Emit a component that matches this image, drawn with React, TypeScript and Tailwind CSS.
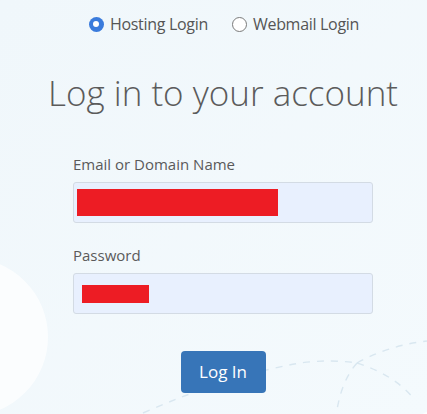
import React from "react";

function Radio({ checked, label }: { checked: boolean; label: string }) {
  return (
    <label className="flex items-center gap-[6px]">
      {checked ? (
        <span className="w-[15px] h-[15px] rounded-full bg-[#3a7bdc] flex items-center justify-center">
          <span className="w-[6px] h-[6px] rounded-full bg-white" />
        </span>
      ) : (
        <span className="w-[15px] h-[15px] rounded-full border border-[#7a7a7a] bg-white" />
      )}
      <span className="text-[16px] tracking-[-0.3px] text-[#555]">{label}</span>
    </label>
  );
}

export default function App() {
  return (
    <div
      className="relative w-[427px] h-[414px] overflow-hidden bg-[#f2f9fc]"
      style={{ fontFamily: '"Open Sans", "Noto Sans", sans-serif' }}
    >
      {/* decorative background */}
      <div className="absolute left-0 top-0 w-[427px] h-[414px] bg-gradient-to-br from-[#f0f7fb] to-[#f4fafd]" />
      <div className="absolute left-[-110px] top-[258px] w-[158px] h-[158px] rounded-full bg-white/70" />
      <div className="absolute left-[370px] top-[402px] w-[200px] h-[200px] rounded-full bg-white/80" />
      <svg className="absolute left-0 top-0" width="427" height="414" fill="none">
        <g stroke="#d9e7f0" strokeWidth="1.4" strokeDasharray="7 7">
          <path d="M143 413 Q 230 375 300 363 Q 330 359 357 363" />
          <path d="M357 363 Q 390 345 427 341" />
          <path d="M357 363 Q 395 375 415 400" />
          <path d="M357 363 Q 342 380 337 410" />
        </g>
      </svg>

      <div className="relative flex flex-col items-center pl-[19px]">
        <div className="flex items-center gap-[24px] mt-[12px] h-[24px] pl-[2px]">
          <Radio checked label="Hosting Login" />
          <Radio checked={false} label="Webmail Login" />
        </div>

        <h1 className="mt-[33px] text-[35px] leading-[48px] font-light text-[#5b5b5b]">
          Log in to your account
        </h1>

        <div className="w-[300px] mt-[37px] flex flex-col">
          <div className="text-[15px] leading-[20px] text-[#5a5a5a]">Email or Domain Name</div>
          <div className="mt-[8px] h-[41px] rounded-[3px] border border-[#d3dbe4] bg-[#e8f0fe] flex items-center pl-[3px]">
            <div className="w-[201px] h-[27px] bg-[#ed1c24]" />
          </div>

          <div className="mt-[22px] text-[15px] leading-[20px] text-[#5a5a5a]">Password</div>
          <div className="mt-[8px] h-[41px] rounded-[3px] border border-[#d3dbe4] bg-[#e8f0fe] flex items-center pl-[8px]">
            <div className="w-[67px] h-[18px] bg-[#ed1c24]" />
          </div>
        </div>

        <button className="mt-[37px] w-[85px] h-[42px] rounded-[4px] bg-[#3775b8] text-white text-[17px]">
          Log In
        </button>
      </div>
    </div>
  );
}
